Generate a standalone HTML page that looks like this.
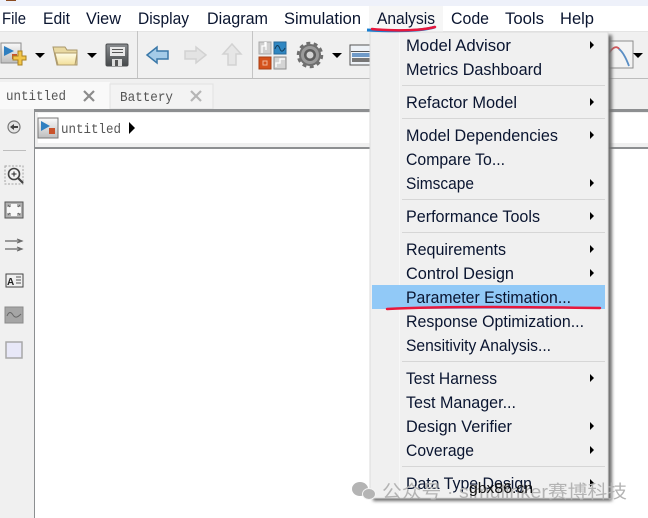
<!DOCTYPE html>
<html><head><meta charset="utf-8"><style>
html,body{margin:0;padding:0;background:#fff;width:648px;height:518px;overflow:hidden}
svg{display:block}
text{font-family:"Liberation Sans","DejaVu Sans",sans-serif}
.m{font-size:16.500px;fill:#0a1530}
.i{font-size:16.500px;fill:#0a1530}
.c{font-family:"Liberation Mono",monospace;font-size:14px;fill:#555}
</style></head><body>
<svg width="648" height="518" viewBox="0 0 648 518" xmlns="http://www.w3.org/2000/svg">
<defs>
<linearGradient id="g1" x1="0" y1="0" x2="0" y2="1"><stop offset="0" stop-color="#fffde8"/><stop offset="1" stop-color="#f2de98"/></linearGradient>
<linearGradient id="g2" x1="0" y1="0" x2="0" y2="1"><stop offset="0" stop-color="#fafafa"/><stop offset="1" stop-color="#bdbdbd"/></linearGradient>
<linearGradient id="g3" x1="0" y1="0" x2="0" y2="1"><stop offset="0" stop-color="#8a8d90"/><stop offset="1" stop-color="#45484a"/></linearGradient>
<filter id="sh" x="-10%" y="-10%" width="120%" height="120%"><feGaussianBlur stdDeviation="1.6"/></filter>
</defs>
<rect width="648" height="518" fill="#fff"/>
<rect width="648" height="6" fill="#eef1fa"/>
<rect x="6" y="0" width="10" height="1" fill="#8a4a20"/>
<rect y="31" width="648" height="48" fill="#f0f0f0"/>
<rect y="31" width="648" height="1" fill="#e4e4e4"/>
<rect y="78" width="648" height="1" fill="#bcbcbc"/>
<rect x="137" y="31" width="1" height="47" fill="#c4c4c4"/>
<rect x="252" y="31" width="1" height="47" fill="#c4c4c4"/>

<text class="m" x="2" y="24" textLength="24" lengthAdjust="spacingAndGlyphs">File</text>
<text class="m" x="43" y="24" textLength="27" lengthAdjust="spacingAndGlyphs">Edit</text>
<text class="m" x="86" y="24" textLength="35" lengthAdjust="spacingAndGlyphs">View</text>
<text class="m" x="138" y="24" textLength="51" lengthAdjust="spacingAndGlyphs">Display</text>
<text class="m" x="207" y="24" textLength="61" lengthAdjust="spacingAndGlyphs">Diagram</text>
<text class="m" x="284" y="24" textLength="77" lengthAdjust="spacingAndGlyphs">Simulation</text>
<rect x="369" y="6" width="74" height="26" fill="#f6f6f6"/>
<text class="m" x="377" y="24" textLength="58" lengthAdjust="spacingAndGlyphs">Analysis</text>
<text class="m" x="451" y="24" textLength="38" lengthAdjust="spacingAndGlyphs">Code</text>
<text class="m" x="505" y="24" textLength="39" lengthAdjust="spacingAndGlyphs">Tools</text>
<text class="m" x="560" y="24" textLength="34" lengthAdjust="spacingAndGlyphs">Help</text>

<!-- toolbar icons -->
<rect x="1" y="43" width="20" height="20" fill="url(#g2)" stroke="#8d8d8d"/>
<path d="M4 46 L14 51 L4 56 Z" fill="#2f7fc0"/>
<rect x="12" y="54" width="5" height="5" fill="#c9532b"/>
<path d="M18 51h4v5h4v4h-4v5h-4v-5h-5v-4h5z" fill="#f2c649" stroke="#a98021"/>
<path d="M35 53h10l-5 5z" fill="#000"/>
<path d="M53 47h12l2 3h10v15H57z" fill="#e9d9a2" stroke="#a8966a"/>
<path d="M55 53h22l-2 12H58z" fill="url(#g1)" stroke="#b09c6c"/>
<path d="M87 53h10l-5 5z" fill="#000"/>
<rect x="106" y="44" width="22" height="22" rx="1.500" fill="url(#g3)" stroke="#4a4c4e"/>
<rect x="110" y="47" width="15" height="9" fill="#e8e8e8"/>
<rect x="112" y="49" width="11" height="1" fill="#555"/><rect x="112" y="52" width="11" height="1" fill="#555"/>
<rect x="112" y="59" width="10" height="7" fill="#ddd"/><rect x="115" y="60" width="3" height="6" fill="#555"/>
<path d="M147 55l10-8v4h11v8h-11v4z" fill="#a4cbe8" stroke="#3a78a8" stroke-width="1.500"/>
<path d="M206 55l-10-8v4h-11v8h11v4z" fill="#e3e3e3" stroke="#d2d2d2" stroke-width="1.500"/>
<path d="M232 44l9 10h-5v11h-8V54h-5z" fill="#e6e6e6" stroke="#d2d2d2" stroke-width="1.500"/>
<rect x="259" y="42" width="12" height="12" fill="#d0d0d0" stroke="#a8a8a8"/>
<path d="M262 53v-7h3v-4M266 50v-8" stroke="#fff" fill="none" stroke-width="1.300"/>
<rect x="274" y="42" width="12" height="12" fill="#2f87c2" stroke="#2a6a99"/>
<path d="M275 49c2-6 4-3 5 0s3 3 5-1" stroke="#123c5c" fill="none"/>
<rect x="259" y="57" width="12" height="12" fill="#d4521c" stroke="#a83f15"/>
<rect x="263" y="61" width="4" height="4" fill="none" stroke="#f1b598"/>
<rect x="274" y="57" width="12" height="12" fill="#d4d4d4" stroke="#8e8e8e"/>
<path d="M276 67v-4h4v-4h5" stroke="#fff" fill="none" stroke-width="1.300"/>
<circle cx="310" cy="55" r="10" fill="#9a9a9a" stroke="#6f6f6f" stroke-width="2"/>
<circle cx="310" cy="55" r="12" fill="none" stroke="#6f6f6f" stroke-width="2.500" stroke-dasharray="4 3.500"/>
<circle cx="310" cy="55" r="6" fill="#5c5c5c"/>
<circle cx="310" cy="55" r="3.500" fill="#d4d4d4"/>
<path d="M332 53h10l-5 5z" fill="#000"/>
<rect x="350" y="45" width="22" height="20" fill="#eef2f7" stroke="#555"/>
<rect x="351" y="51" width="20" height="1" fill="#555"/>
<rect x="352" y="53" width="18" height="4" fill="#6f9ac8"/>
<rect x="352" y="58" width="18" height="4" fill="#777"/>
<rect x="609" y="41" width="24" height="27" fill="#f3f3f3" stroke="#8c8c8c"/>
<path d="M609 53c4-6 8-8 11-3" fill="none" stroke="#d0555a" stroke-width="1.800"/>
<path d="M619 49c4 3 7 9 10 17" fill="none" stroke="#5a8ec4" stroke-width="1.800"/>
<path d="M633 53h10l-5 5z" fill="#000"/>

<!-- tab strip -->
<rect y="79" width="648" height="30" fill="#f0f0f0"/>
<rect x="0" y="82" width="110" height="27" fill="#f9f9f9"/>
<rect x="110" y="84" width="103" height="25" fill="#f3f3f3" stroke="#e2e2e2"/>
<text class="c" x="6" y="100" textLength="60" lengthAdjust="spacingAndGlyphs">untitled</text>
<path d="M84 91l10 10M94 91l-10 10" stroke="#8b8b8b" stroke-width="2.200"/>
<text class="c" x="120" y="101" textLength="53" lengthAdjust="spacingAndGlyphs">Battery</text>
<path d="M191 91l10 10M201 91l-10 10" stroke="#b5b5b5" stroke-width="2.200"/>

<!-- left bar -->
<rect y="109" width="35" height="409" fill="#f0f0f0"/>
<rect x="34" y="109" width="1" height="409" fill="#8c8f91"/>
<rect x="35" y="109" width="613" height="3" fill="#8d8f91"/>
<rect x="35" y="112" width="613" height="32" fill="#f0f0f0"/>
<rect x="38" y="113" width="610" height="30" fill="#fff"/>
<rect x="35" y="147" width="613" height="2" fill="#8d8f91"/>
<rect x="35" y="144" width="613" height="3" fill="#f0f0f0"/>
<circle cx="14" cy="127" r="6" fill="#e5e5e5" stroke="#777" stroke-width="1.200"/>
<path d="M10 127l4-3v2h4v2h-4v2z" fill="#444"/>
<rect x="3" y="150" width="23" height="1" fill="#bdbdbd"/>
<rect x="38" y="118" width="20" height="20" fill="url(#g2)" stroke="#777"/>
<path d="M41 121l9 5-9 5z" fill="#2f7fc0"/>
<rect x="49" y="128" width="6" height="6" fill="#c9532b"/>
<text class="c" x="61" y="133" textLength="60" lengthAdjust="spacingAndGlyphs">untitled</text>
<path d="M129 122l6 6-6 6z" fill="#000"/>

<rect x="5" y="166" width="18" height="18" fill="none" stroke="#a5a5a5" stroke-dasharray="2 1.500"/>
<circle cx="14" cy="174" r="5.500" fill="#f4f4f4" stroke="#444" stroke-width="1.600"/>
<path d="M18 178l5 5" stroke="#444" stroke-width="2.200"/>
<path d="M11.500 174h5M14 171.500v5" stroke="#222"/>
<rect x="5" y="202" width="18" height="16" fill="#b0b0b0" stroke="#555"/>
<path d="M11 204h6v3h4v6h-4v3h-6v-3H7v-6h4z" fill="#f7f7f7"/>
<path d="M8 205l2 2M20 205l-2 2M8 215l2-2M20 215l-2-2" stroke="#666"/>
<path d="M5 241h15M5 249h15M17 239l5 2-5 2M17 247l5 2-5 2" fill="none" stroke="#666" stroke-width="1.200"/>
<rect x="6" y="274" width="17" height="13" fill="#f0f0f0" stroke="#444"/>
<text x="7" y="285" font-size="10" font-weight="bold" fill="#222">A</text>
<path d="M16 277h5M16 280h5M16 283h5" stroke="#555"/>
<rect x="5" y="307" width="18" height="16" fill="#a5a5a5" stroke="#8a8a8a"/>
<path d="M7 316c2-5 4-4 6-1s4 3 8-1" fill="none" stroke="#666"/>
<rect x="6" y="342" width="16" height="16" fill="#e8e8f8" stroke="#a8a8a8" stroke-width="1.500"/>

<!-- menu shadow and box -->
<rect x="373" y="35" width="239" height="466" fill="#6d6d6d" filter="url(#sh)"/>
<rect x="370" y="32" width="238" height="466" fill="#f0f0f0" stroke="#dcdcdc"/>
<rect x="399" y="33" width="1" height="464" fill="#f7f7f7"/>

<rect x="402" y="85" width="203" height="1" fill="#d6d6d6"/>
<rect x="402" y="118" width="203" height="1" fill="#d6d6d6"/>
<rect x="402" y="199" width="203" height="1" fill="#d6d6d6"/>
<rect x="402" y="232" width="203" height="1" fill="#d6d6d6"/>
<rect x="402" y="361" width="203" height="1" fill="#d6d6d6"/>
<rect x="402" y="466" width="203" height="1" fill="#d6d6d6"/>
<rect x="372" y="285" width="233" height="24" fill="#91c9f7"/>

<text class="i" x="406" y="51" textLength="105" lengthAdjust="spacingAndGlyphs">Model Advisor</text>
<text class="i" x="406" y="75" textLength="136" lengthAdjust="spacingAndGlyphs">Metrics Dashboard</text>
<text class="i" x="406" y="108" textLength="111" lengthAdjust="spacingAndGlyphs">Refactor Model</text>
<text class="i" x="406" y="141" textLength="152" lengthAdjust="spacingAndGlyphs">Model Dependencies</text>
<text class="i" x="406" y="165" textLength="99" lengthAdjust="spacingAndGlyphs">Compare To...</text>
<text class="i" x="406" y="189" textLength="68" lengthAdjust="spacingAndGlyphs">Simscape</text>
<text class="i" x="406" y="222" textLength="134" lengthAdjust="spacingAndGlyphs">Performance Tools</text>
<text class="i" x="406" y="255" textLength="100" lengthAdjust="spacingAndGlyphs">Requirements</text>
<text class="i" x="406" y="279" textLength="108" lengthAdjust="spacingAndGlyphs">Control Design</text>
<text class="i" x="406" y="303" textLength="165" lengthAdjust="spacingAndGlyphs">Parameter Estimation...</text>
<text class="i" x="406" y="327" textLength="178" lengthAdjust="spacingAndGlyphs">Response Optimization...</text>
<text class="i" x="406" y="351" textLength="145" lengthAdjust="spacingAndGlyphs">Sensitivity Analysis...</text>
<text class="i" x="406" y="384" textLength="91" lengthAdjust="spacingAndGlyphs">Test Harness</text>
<text class="i" x="406" y="408" textLength="110" lengthAdjust="spacingAndGlyphs">Test Manager...</text>
<text class="i" x="406" y="432" textLength="106" lengthAdjust="spacingAndGlyphs">Design Verifier</text>
<text class="i" x="406" y="456" textLength="68" lengthAdjust="spacingAndGlyphs">Coverage</text>
<text class="i" x="406" y="489" textLength="126" lengthAdjust="spacingAndGlyphs">Data Type Design</text>

<g fill="#000">
<path d="M590 41l4 4-4 4z"/><path d="M590 98l4 4-4 4z"/><path d="M590 131l4 4-4 4z"/>
<path d="M590 179l4 4-4 4z"/><path d="M590 212l4 4-4 4z"/><path d="M590 245l4 4-4 4z"/>
<path d="M590 269l4 4-4 4z"/><path d="M590 374l4 4-4 4z"/><path d="M590 422l4 4-4 4z"/>
<path d="M590 446l4 4-4 4z"/><path d="M590 479l4 4-4 4z"/>
</g>

<!-- annotations -->
<path d="M367 30c20 1 52 2 68-3" fill="none" stroke="#1a7fd0" stroke-width="3"/>
<path d="M372 29c20 2 48 2 63-2" fill="none" stroke="#e8173c" stroke-width="2.500" stroke-linecap="round"/>
<path d="M387 309c60-3 150-2 213-1" fill="none" stroke="#e8173c" stroke-width="2.500" stroke-linecap="round"/>

<!-- watermark -->
<g fill="#b4b4b4">
<ellipse cx="360" cy="489" rx="8" ry="7"/>
<ellipse cx="369" cy="494" rx="6.500" ry="5.500" stroke="#f4f4f4" stroke-width="1"/>
</g>
<text x="382" y="498" font-size="18" fill="#b3b3b3" style='font-family:"Liberation Sans","Noto Sans CJK SC",sans-serif' textLength="245" lengthAdjust="spacingAndGlyphs">公众号 · simulinker赛博科技</text>
<text x="469" y="493" font-size="15" fill="#111" textLength="64" lengthAdjust="spacingAndGlyphs">gbx86.cn</text>
</svg>
</body></html>
